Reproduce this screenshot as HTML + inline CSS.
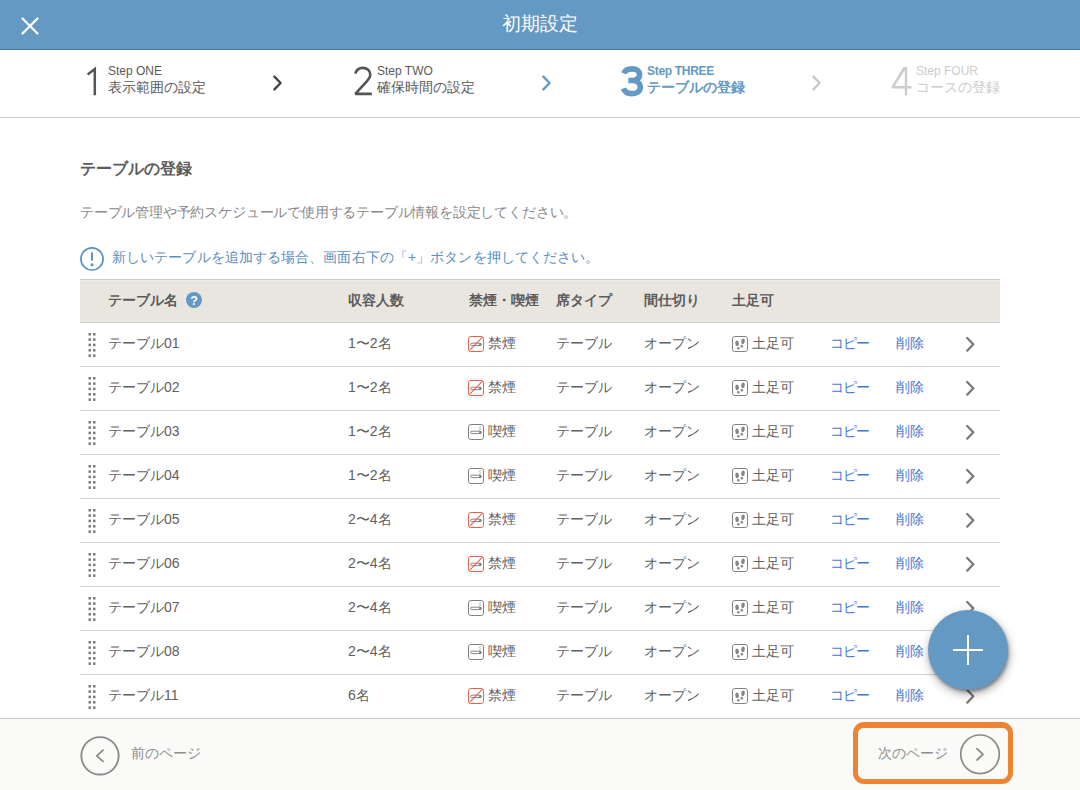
<!DOCTYPE html>
<html><head><meta charset="utf-8">
<style>
*{box-sizing:border-box;margin:0;padding:0}
html,body{width:1080px;height:790px;overflow:hidden;background:#fff;font-family:"Liberation Sans",sans-serif;color:#555}
.abs{position:absolute}
#hdr{position:absolute;left:0;top:0;width:1080px;height:50px;background:#6399c3;border-bottom:1px solid #4b7499}
#hdr .t{position:absolute;left:0;width:1080px;top:13px;text-align:center;color:#fff;font-size:19px;line-height:22px}
#steps{position:absolute;left:0;top:50px;width:1080px;height:68px;border-bottom:1px solid #cfcfcf;background:#fff}
.step{position:absolute;top:0;height:68px}
.step .n{position:absolute;top:6px;left:0;font-size:39px;line-height:46px;font-weight:normal}
.step .s{position:absolute;top:14px;font-size:12px;line-height:14px;white-space:nowrap}
.step .j{position:absolute;top:29px;font-size:14px;line-height:17px;white-space:nowrap}
.chev{position:absolute}
.main{position:absolute;left:80px;top:118px;width:920px}
h1{position:absolute;left:80px;top:159px;font-size:16px;line-height:20px;font-weight:bold;color:#5c5c5c;white-space:nowrap}
.desc{position:absolute;left:80px;top:203px;letter-spacing:-0.19px;font-size:14px;line-height:18px;color:#888;white-space:nowrap}
.info{position:absolute;left:112px;top:248px;letter-spacing:0.09px;font-size:14px;line-height:18px;color:#5a8fc0;white-space:nowrap}
#tbl{position:absolute;left:80px;top:279px;width:920px}
.th{position:absolute;left:0;top:0;width:920px;height:44px;background:#e9e6df;border-top:1px solid #cccccc;border-bottom:1px solid #cccccc;box-shadow:inset 0 1px #eeece4,inset 0 -1px #eeece4}
.th span{position:absolute;top:11px;font-size:14px;line-height:18px;font-weight:bold;color:#5c5c5c;white-space:nowrap}
.row{position:absolute;left:0;width:920px;height:44px;border-bottom:1px solid #d2d2d2}
.row span{position:absolute;top:11px;font-size:14px;line-height:18px;color:#606060;white-space:nowrap}
.row .lk{color:#4279cf}
#foot{position:absolute;left:0;top:718px;width:1080px;height:72px;background:#fafaf8;border-top:1px solid #cccccc}
.fab{position:absolute;left:928px;top:610px;width:80px;height:80px;border-radius:50%;background:#6399c3;box-shadow:1px 2px 3px rgba(0,0,0,.3),1px 4px 10px rgba(0,0,0,.35)}
</style></head><body>
<div id="hdr">
  <svg class="abs" style="left:0;top:0" width="60" height="50"><path d="M22.5 18.5L37.5 33.5M37.5 18.5L22.5 33.5" stroke="#fff" stroke-width="2.3" stroke-linecap="round"/></svg>
  <div class="t">初期設定</div>
</div>
<div id="steps">
  <svg class="abs" style="left:0;top:-50px" width="1080" height="118">
    <path d="M87.6 74.4L94.8 69V95.2" fill="none" stroke="#555" stroke-width="2.5" stroke-linejoin="miter"/>
    <path d="M355.2 73.6C356.2 70.3 359 67.9 362.8 67.9C367 67.9 370.3 70.8 370.3 74.7C370.3 77.2 369.2 79 367 81.2L355.3 93.9H371.8" fill="none" stroke="#555" stroke-width="2.6" stroke-linejoin="bevel"/>
    <path d="M623.8 73.4C625.1 70.4 628.2 68.9 632 68.9C636.6 68.9 639.6 71.3 639.6 74.6C639.6 78.2 636.6 80.5 632.3 80.5H628.3M632.3 80.5C637 80.5 640.3 83.3 640.3 87.4C640.3 91.3 636.8 93.6 631.9 93.6C627.9 93.6 624.6 91.9 623.5 88.4" fill="none" stroke="#6399c3" stroke-width="5.6"/>
    <path d="M903.3 67H907.2V86H911.5V88.4H907.2V95.2H904.8V88.4H891.8V86.2ZM904.8 70.2V86H894.6Z" fill="#cccccc" fill-rule="evenodd"/>
  </svg>
  <div class="step" style="left:85px;color:#5a5a5a"><div class="s" style="left:23px">Step ONE</div><div class="j" style="left:23px">表示範囲の設定</div></div>
  <div class="step" style="left:351px;color:#5a5a5a"><div class="s" style="left:26px">Step TWO</div><div class="j" style="left:26px">確保時間の設定</div></div>
  <div class="step" style="left:619px;color:#6399c3"><div class="s" style="left:28px;font-weight:bold;letter-spacing:-0.3px">Step THREE</div><div class="j" style="left:28px;font-weight:bold">テーブルの登録</div></div>
  <div class="step" style="left:889px;color:#cccccc"><div class="s" style="left:27px">Step FOUR</div><div class="j" style="left:27px">コースの登録</div></div>
  <svg class="abs" style="left:270px;top:22px" width="16" height="22"><path d="M4.4 4.6L10.6 11L4.4 17.4" fill="none" stroke="#444" stroke-width="2.4" stroke-linecap="round" stroke-linejoin="round"/></svg>
  <svg class="abs" style="left:539px;top:22px" width="16" height="22"><path d="M4.4 4.6L10.6 11L4.4 17.4" fill="none" stroke="#6399c3" stroke-width="2.4" stroke-linecap="round" stroke-linejoin="round"/></svg>
  <svg class="abs" style="left:809px;top:22px" width="16" height="22"><path d="M4.4 4.6L10.6 11L4.4 17.4" fill="none" stroke="#c8c8c8" stroke-width="2.4" stroke-linecap="round" stroke-linejoin="round"/></svg>
</div>
<h1>テーブルの登録</h1>
<div class="desc">テーブル管理や予約スケジュールで使用するテーブル情報を設定してください。</div>
<svg class="abs" style="left:79px;top:246px" width="26" height="26"><circle cx="13" cy="12.9" r="11.1" fill="none" stroke="#5592c6" stroke-width="1.7"/><path d="M13 7V13.9" stroke="#5592c6" stroke-width="1.9" stroke-linecap="round"/><circle cx="13" cy="18.8" r="1.55" fill="#5592c6"/></svg>
<div class="info">新しいテーブルを追加する場合、画面右下の「+」ボタンを押してください。</div>
<div id="tbl">
  <div class="th">
    <span style="left:28px">テーブル名</span>
    <svg class="abs" style="left:105px;top:11px" width="18" height="18"><circle cx="9" cy="9" r="8" fill="#6399c3"/><text x="9" y="13.6" text-anchor="middle" font-size="12.5" font-weight="bold" fill="#fff" font-family="Liberation Sans">?</text></svg>
    <span style="left:268px">収容人数</span>
    <span style="left:389px">禁煙・喫煙</span>
    <span style="left:476px">席タイプ</span>
    <span style="left:564px">間仕切り</span>
    <span style="left:652px">土足可</span>
  </div>
<div class="row" style="top:44px"><svg class="abs" style="left:7px;top:9px" width="12" height="28"><rect x="1.50" y="1.00" width="2.5" height="2.5" fill="#7a7a7a"/><rect x="6.00" y="1.00" width="2.5" height="2.5" fill="#7a7a7a"/><rect x="1.50" y="6.35" width="2.5" height="2.5" fill="#7a7a7a"/><rect x="6.00" y="6.35" width="2.5" height="2.5" fill="#7a7a7a"/><rect x="1.50" y="11.70" width="2.5" height="2.5" fill="#7a7a7a"/><rect x="6.00" y="11.70" width="2.5" height="2.5" fill="#7a7a7a"/><rect x="1.50" y="17.05" width="2.5" height="2.5" fill="#7a7a7a"/><rect x="6.00" y="17.05" width="2.5" height="2.5" fill="#7a7a7a"/><rect x="1.50" y="22.40" width="2.5" height="2.5" fill="#7a7a7a"/><rect x="6.00" y="22.40" width="2.5" height="2.5" fill="#7a7a7a"/></svg><span style="left:28px">テーブル01</span><span style="left:268px">1〜2名</span><svg class="abs" style="left:388px;top:13px" width="16" height="16"><rect x="0.5" y="0.5" width="15" height="15" rx="2.2" fill="#fff" stroke="#e8614a" stroke-width="1"/><rect x="2.6" y="7.2" width="10.6" height="2.4" rx="1.2" fill="none" stroke="#777" stroke-width=".9"/><rect x="11.2" y="7.2" width="2" height="2.4" fill="#777"/><path d="M1.5 14.3L14.5 1.2" stroke="#e8614a" stroke-width="1.1"/></svg><span style="left:408px">禁煙</span><span style="left:476px">テーブル</span><span style="left:564px">オープン</span><svg class="abs" style="left:652px;top:13px" width="16" height="16"><rect x="0.5" y="0.5" width="15" height="15" rx="2.2" fill="#fff" stroke="#808080" stroke-width="1"/><ellipse cx="5.1" cy="7.4" rx="1.8" ry="2.9" fill="#858585" transform="rotate(-8 5.1 7.4)"/><ellipse cx="6.3" cy="12.3" rx="1.3" ry="1.2" fill="#858585"/><ellipse cx="11" cy="5.3" rx="1.8" ry="2.9" fill="#858585" transform="rotate(10 11 5.3)"/><ellipse cx="9.8" cy="10.3" rx="1.3" ry="1.2" fill="#858585"/></svg><span style="left:672px">土足可</span><span class="lk" style="left:750px;letter-spacing:-1px">コピー</span><span class="lk" style="left:816px">削除</span><svg class="abs" style="left:882px;top:13px" width="16" height="18"><path d="M5.2 1.9L11.3 8.3L5.2 14.7" fill="none" stroke="#777" stroke-width="2.2" stroke-linecap="round" stroke-linejoin="round"/></svg></div>
<div class="row" style="top:88px"><svg class="abs" style="left:7px;top:9px" width="12" height="28"><rect x="1.50" y="1.00" width="2.5" height="2.5" fill="#7a7a7a"/><rect x="6.00" y="1.00" width="2.5" height="2.5" fill="#7a7a7a"/><rect x="1.50" y="6.35" width="2.5" height="2.5" fill="#7a7a7a"/><rect x="6.00" y="6.35" width="2.5" height="2.5" fill="#7a7a7a"/><rect x="1.50" y="11.70" width="2.5" height="2.5" fill="#7a7a7a"/><rect x="6.00" y="11.70" width="2.5" height="2.5" fill="#7a7a7a"/><rect x="1.50" y="17.05" width="2.5" height="2.5" fill="#7a7a7a"/><rect x="6.00" y="17.05" width="2.5" height="2.5" fill="#7a7a7a"/><rect x="1.50" y="22.40" width="2.5" height="2.5" fill="#7a7a7a"/><rect x="6.00" y="22.40" width="2.5" height="2.5" fill="#7a7a7a"/></svg><span style="left:28px">テーブル02</span><span style="left:268px">1〜2名</span><svg class="abs" style="left:388px;top:13px" width="16" height="16"><rect x="0.5" y="0.5" width="15" height="15" rx="2.2" fill="#fff" stroke="#e8614a" stroke-width="1"/><rect x="2.6" y="7.2" width="10.6" height="2.4" rx="1.2" fill="none" stroke="#777" stroke-width=".9"/><rect x="11.2" y="7.2" width="2" height="2.4" fill="#777"/><path d="M1.5 14.3L14.5 1.2" stroke="#e8614a" stroke-width="1.1"/></svg><span style="left:408px">禁煙</span><span style="left:476px">テーブル</span><span style="left:564px">オープン</span><svg class="abs" style="left:652px;top:13px" width="16" height="16"><rect x="0.5" y="0.5" width="15" height="15" rx="2.2" fill="#fff" stroke="#808080" stroke-width="1"/><ellipse cx="5.1" cy="7.4" rx="1.8" ry="2.9" fill="#858585" transform="rotate(-8 5.1 7.4)"/><ellipse cx="6.3" cy="12.3" rx="1.3" ry="1.2" fill="#858585"/><ellipse cx="11" cy="5.3" rx="1.8" ry="2.9" fill="#858585" transform="rotate(10 11 5.3)"/><ellipse cx="9.8" cy="10.3" rx="1.3" ry="1.2" fill="#858585"/></svg><span style="left:672px">土足可</span><span class="lk" style="left:750px;letter-spacing:-1px">コピー</span><span class="lk" style="left:816px">削除</span><svg class="abs" style="left:882px;top:13px" width="16" height="18"><path d="M5.2 1.9L11.3 8.3L5.2 14.7" fill="none" stroke="#777" stroke-width="2.2" stroke-linecap="round" stroke-linejoin="round"/></svg></div>
<div class="row" style="top:132px"><svg class="abs" style="left:7px;top:9px" width="12" height="28"><rect x="1.50" y="1.00" width="2.5" height="2.5" fill="#7a7a7a"/><rect x="6.00" y="1.00" width="2.5" height="2.5" fill="#7a7a7a"/><rect x="1.50" y="6.35" width="2.5" height="2.5" fill="#7a7a7a"/><rect x="6.00" y="6.35" width="2.5" height="2.5" fill="#7a7a7a"/><rect x="1.50" y="11.70" width="2.5" height="2.5" fill="#7a7a7a"/><rect x="6.00" y="11.70" width="2.5" height="2.5" fill="#7a7a7a"/><rect x="1.50" y="17.05" width="2.5" height="2.5" fill="#7a7a7a"/><rect x="6.00" y="17.05" width="2.5" height="2.5" fill="#7a7a7a"/><rect x="1.50" y="22.40" width="2.5" height="2.5" fill="#7a7a7a"/><rect x="6.00" y="22.40" width="2.5" height="2.5" fill="#7a7a7a"/></svg><span style="left:28px">テーブル03</span><span style="left:268px">1〜2名</span><svg class="abs" style="left:388px;top:13px" width="16" height="16"><rect x="0.5" y="0.5" width="15" height="15" rx="2.2" fill="#fff" stroke="#808080" stroke-width="1"/><rect x="2.6" y="7.2" width="10.6" height="2.4" rx="1.2" fill="none" stroke="#777" stroke-width=".9"/><rect x="11.2" y="7.2" width="2" height="2.4" fill="#777"/><path d="M12.6 2.6C11.4 2.6 11.2 3.7 12 4.2C12.8 4.7 12.6 5.8 11.4 5.8" fill="none" stroke="#888" stroke-width=".7"/></svg><span style="left:408px">喫煙</span><span style="left:476px">テーブル</span><span style="left:564px">オープン</span><svg class="abs" style="left:652px;top:13px" width="16" height="16"><rect x="0.5" y="0.5" width="15" height="15" rx="2.2" fill="#fff" stroke="#808080" stroke-width="1"/><ellipse cx="5.1" cy="7.4" rx="1.8" ry="2.9" fill="#858585" transform="rotate(-8 5.1 7.4)"/><ellipse cx="6.3" cy="12.3" rx="1.3" ry="1.2" fill="#858585"/><ellipse cx="11" cy="5.3" rx="1.8" ry="2.9" fill="#858585" transform="rotate(10 11 5.3)"/><ellipse cx="9.8" cy="10.3" rx="1.3" ry="1.2" fill="#858585"/></svg><span style="left:672px">土足可</span><span class="lk" style="left:750px;letter-spacing:-1px">コピー</span><span class="lk" style="left:816px">削除</span><svg class="abs" style="left:882px;top:13px" width="16" height="18"><path d="M5.2 1.9L11.3 8.3L5.2 14.7" fill="none" stroke="#777" stroke-width="2.2" stroke-linecap="round" stroke-linejoin="round"/></svg></div>
<div class="row" style="top:176px"><svg class="abs" style="left:7px;top:9px" width="12" height="28"><rect x="1.50" y="1.00" width="2.5" height="2.5" fill="#7a7a7a"/><rect x="6.00" y="1.00" width="2.5" height="2.5" fill="#7a7a7a"/><rect x="1.50" y="6.35" width="2.5" height="2.5" fill="#7a7a7a"/><rect x="6.00" y="6.35" width="2.5" height="2.5" fill="#7a7a7a"/><rect x="1.50" y="11.70" width="2.5" height="2.5" fill="#7a7a7a"/><rect x="6.00" y="11.70" width="2.5" height="2.5" fill="#7a7a7a"/><rect x="1.50" y="17.05" width="2.5" height="2.5" fill="#7a7a7a"/><rect x="6.00" y="17.05" width="2.5" height="2.5" fill="#7a7a7a"/><rect x="1.50" y="22.40" width="2.5" height="2.5" fill="#7a7a7a"/><rect x="6.00" y="22.40" width="2.5" height="2.5" fill="#7a7a7a"/></svg><span style="left:28px">テーブル04</span><span style="left:268px">1〜2名</span><svg class="abs" style="left:388px;top:13px" width="16" height="16"><rect x="0.5" y="0.5" width="15" height="15" rx="2.2" fill="#fff" stroke="#808080" stroke-width="1"/><rect x="2.6" y="7.2" width="10.6" height="2.4" rx="1.2" fill="none" stroke="#777" stroke-width=".9"/><rect x="11.2" y="7.2" width="2" height="2.4" fill="#777"/><path d="M12.6 2.6C11.4 2.6 11.2 3.7 12 4.2C12.8 4.7 12.6 5.8 11.4 5.8" fill="none" stroke="#888" stroke-width=".7"/></svg><span style="left:408px">喫煙</span><span style="left:476px">テーブル</span><span style="left:564px">オープン</span><svg class="abs" style="left:652px;top:13px" width="16" height="16"><rect x="0.5" y="0.5" width="15" height="15" rx="2.2" fill="#fff" stroke="#808080" stroke-width="1"/><ellipse cx="5.1" cy="7.4" rx="1.8" ry="2.9" fill="#858585" transform="rotate(-8 5.1 7.4)"/><ellipse cx="6.3" cy="12.3" rx="1.3" ry="1.2" fill="#858585"/><ellipse cx="11" cy="5.3" rx="1.8" ry="2.9" fill="#858585" transform="rotate(10 11 5.3)"/><ellipse cx="9.8" cy="10.3" rx="1.3" ry="1.2" fill="#858585"/></svg><span style="left:672px">土足可</span><span class="lk" style="left:750px;letter-spacing:-1px">コピー</span><span class="lk" style="left:816px">削除</span><svg class="abs" style="left:882px;top:13px" width="16" height="18"><path d="M5.2 1.9L11.3 8.3L5.2 14.7" fill="none" stroke="#777" stroke-width="2.2" stroke-linecap="round" stroke-linejoin="round"/></svg></div>
<div class="row" style="top:220px"><svg class="abs" style="left:7px;top:9px" width="12" height="28"><rect x="1.50" y="1.00" width="2.5" height="2.5" fill="#7a7a7a"/><rect x="6.00" y="1.00" width="2.5" height="2.5" fill="#7a7a7a"/><rect x="1.50" y="6.35" width="2.5" height="2.5" fill="#7a7a7a"/><rect x="6.00" y="6.35" width="2.5" height="2.5" fill="#7a7a7a"/><rect x="1.50" y="11.70" width="2.5" height="2.5" fill="#7a7a7a"/><rect x="6.00" y="11.70" width="2.5" height="2.5" fill="#7a7a7a"/><rect x="1.50" y="17.05" width="2.5" height="2.5" fill="#7a7a7a"/><rect x="6.00" y="17.05" width="2.5" height="2.5" fill="#7a7a7a"/><rect x="1.50" y="22.40" width="2.5" height="2.5" fill="#7a7a7a"/><rect x="6.00" y="22.40" width="2.5" height="2.5" fill="#7a7a7a"/></svg><span style="left:28px">テーブル05</span><span style="left:268px">2〜4名</span><svg class="abs" style="left:388px;top:13px" width="16" height="16"><rect x="0.5" y="0.5" width="15" height="15" rx="2.2" fill="#fff" stroke="#e8614a" stroke-width="1"/><rect x="2.6" y="7.2" width="10.6" height="2.4" rx="1.2" fill="none" stroke="#777" stroke-width=".9"/><rect x="11.2" y="7.2" width="2" height="2.4" fill="#777"/><path d="M1.5 14.3L14.5 1.2" stroke="#e8614a" stroke-width="1.1"/></svg><span style="left:408px">禁煙</span><span style="left:476px">テーブル</span><span style="left:564px">オープン</span><svg class="abs" style="left:652px;top:13px" width="16" height="16"><rect x="0.5" y="0.5" width="15" height="15" rx="2.2" fill="#fff" stroke="#808080" stroke-width="1"/><ellipse cx="5.1" cy="7.4" rx="1.8" ry="2.9" fill="#858585" transform="rotate(-8 5.1 7.4)"/><ellipse cx="6.3" cy="12.3" rx="1.3" ry="1.2" fill="#858585"/><ellipse cx="11" cy="5.3" rx="1.8" ry="2.9" fill="#858585" transform="rotate(10 11 5.3)"/><ellipse cx="9.8" cy="10.3" rx="1.3" ry="1.2" fill="#858585"/></svg><span style="left:672px">土足可</span><span class="lk" style="left:750px;letter-spacing:-1px">コピー</span><span class="lk" style="left:816px">削除</span><svg class="abs" style="left:882px;top:13px" width="16" height="18"><path d="M5.2 1.9L11.3 8.3L5.2 14.7" fill="none" stroke="#777" stroke-width="2.2" stroke-linecap="round" stroke-linejoin="round"/></svg></div>
<div class="row" style="top:264px"><svg class="abs" style="left:7px;top:9px" width="12" height="28"><rect x="1.50" y="1.00" width="2.5" height="2.5" fill="#7a7a7a"/><rect x="6.00" y="1.00" width="2.5" height="2.5" fill="#7a7a7a"/><rect x="1.50" y="6.35" width="2.5" height="2.5" fill="#7a7a7a"/><rect x="6.00" y="6.35" width="2.5" height="2.5" fill="#7a7a7a"/><rect x="1.50" y="11.70" width="2.5" height="2.5" fill="#7a7a7a"/><rect x="6.00" y="11.70" width="2.5" height="2.5" fill="#7a7a7a"/><rect x="1.50" y="17.05" width="2.5" height="2.5" fill="#7a7a7a"/><rect x="6.00" y="17.05" width="2.5" height="2.5" fill="#7a7a7a"/><rect x="1.50" y="22.40" width="2.5" height="2.5" fill="#7a7a7a"/><rect x="6.00" y="22.40" width="2.5" height="2.5" fill="#7a7a7a"/></svg><span style="left:28px">テーブル06</span><span style="left:268px">2〜4名</span><svg class="abs" style="left:388px;top:13px" width="16" height="16"><rect x="0.5" y="0.5" width="15" height="15" rx="2.2" fill="#fff" stroke="#e8614a" stroke-width="1"/><rect x="2.6" y="7.2" width="10.6" height="2.4" rx="1.2" fill="none" stroke="#777" stroke-width=".9"/><rect x="11.2" y="7.2" width="2" height="2.4" fill="#777"/><path d="M1.5 14.3L14.5 1.2" stroke="#e8614a" stroke-width="1.1"/></svg><span style="left:408px">禁煙</span><span style="left:476px">テーブル</span><span style="left:564px">オープン</span><svg class="abs" style="left:652px;top:13px" width="16" height="16"><rect x="0.5" y="0.5" width="15" height="15" rx="2.2" fill="#fff" stroke="#808080" stroke-width="1"/><ellipse cx="5.1" cy="7.4" rx="1.8" ry="2.9" fill="#858585" transform="rotate(-8 5.1 7.4)"/><ellipse cx="6.3" cy="12.3" rx="1.3" ry="1.2" fill="#858585"/><ellipse cx="11" cy="5.3" rx="1.8" ry="2.9" fill="#858585" transform="rotate(10 11 5.3)"/><ellipse cx="9.8" cy="10.3" rx="1.3" ry="1.2" fill="#858585"/></svg><span style="left:672px">土足可</span><span class="lk" style="left:750px;letter-spacing:-1px">コピー</span><span class="lk" style="left:816px">削除</span><svg class="abs" style="left:882px;top:13px" width="16" height="18"><path d="M5.2 1.9L11.3 8.3L5.2 14.7" fill="none" stroke="#777" stroke-width="2.2" stroke-linecap="round" stroke-linejoin="round"/></svg></div>
<div class="row" style="top:308px"><svg class="abs" style="left:7px;top:9px" width="12" height="28"><rect x="1.50" y="1.00" width="2.5" height="2.5" fill="#7a7a7a"/><rect x="6.00" y="1.00" width="2.5" height="2.5" fill="#7a7a7a"/><rect x="1.50" y="6.35" width="2.5" height="2.5" fill="#7a7a7a"/><rect x="6.00" y="6.35" width="2.5" height="2.5" fill="#7a7a7a"/><rect x="1.50" y="11.70" width="2.5" height="2.5" fill="#7a7a7a"/><rect x="6.00" y="11.70" width="2.5" height="2.5" fill="#7a7a7a"/><rect x="1.50" y="17.05" width="2.5" height="2.5" fill="#7a7a7a"/><rect x="6.00" y="17.05" width="2.5" height="2.5" fill="#7a7a7a"/><rect x="1.50" y="22.40" width="2.5" height="2.5" fill="#7a7a7a"/><rect x="6.00" y="22.40" width="2.5" height="2.5" fill="#7a7a7a"/></svg><span style="left:28px">テーブル07</span><span style="left:268px">2〜4名</span><svg class="abs" style="left:388px;top:13px" width="16" height="16"><rect x="0.5" y="0.5" width="15" height="15" rx="2.2" fill="#fff" stroke="#808080" stroke-width="1"/><rect x="2.6" y="7.2" width="10.6" height="2.4" rx="1.2" fill="none" stroke="#777" stroke-width=".9"/><rect x="11.2" y="7.2" width="2" height="2.4" fill="#777"/><path d="M12.6 2.6C11.4 2.6 11.2 3.7 12 4.2C12.8 4.7 12.6 5.8 11.4 5.8" fill="none" stroke="#888" stroke-width=".7"/></svg><span style="left:408px">喫煙</span><span style="left:476px">テーブル</span><span style="left:564px">オープン</span><svg class="abs" style="left:652px;top:13px" width="16" height="16"><rect x="0.5" y="0.5" width="15" height="15" rx="2.2" fill="#fff" stroke="#808080" stroke-width="1"/><ellipse cx="5.1" cy="7.4" rx="1.8" ry="2.9" fill="#858585" transform="rotate(-8 5.1 7.4)"/><ellipse cx="6.3" cy="12.3" rx="1.3" ry="1.2" fill="#858585"/><ellipse cx="11" cy="5.3" rx="1.8" ry="2.9" fill="#858585" transform="rotate(10 11 5.3)"/><ellipse cx="9.8" cy="10.3" rx="1.3" ry="1.2" fill="#858585"/></svg><span style="left:672px">土足可</span><span class="lk" style="left:750px;letter-spacing:-1px">コピー</span><span class="lk" style="left:816px">削除</span><svg class="abs" style="left:882px;top:13px" width="16" height="18"><path d="M5.2 1.9L11.3 8.3L5.2 14.7" fill="none" stroke="#777" stroke-width="2.2" stroke-linecap="round" stroke-linejoin="round"/></svg></div>
<div class="row" style="top:352px"><svg class="abs" style="left:7px;top:9px" width="12" height="28"><rect x="1.50" y="1.00" width="2.5" height="2.5" fill="#7a7a7a"/><rect x="6.00" y="1.00" width="2.5" height="2.5" fill="#7a7a7a"/><rect x="1.50" y="6.35" width="2.5" height="2.5" fill="#7a7a7a"/><rect x="6.00" y="6.35" width="2.5" height="2.5" fill="#7a7a7a"/><rect x="1.50" y="11.70" width="2.5" height="2.5" fill="#7a7a7a"/><rect x="6.00" y="11.70" width="2.5" height="2.5" fill="#7a7a7a"/><rect x="1.50" y="17.05" width="2.5" height="2.5" fill="#7a7a7a"/><rect x="6.00" y="17.05" width="2.5" height="2.5" fill="#7a7a7a"/><rect x="1.50" y="22.40" width="2.5" height="2.5" fill="#7a7a7a"/><rect x="6.00" y="22.40" width="2.5" height="2.5" fill="#7a7a7a"/></svg><span style="left:28px">テーブル08</span><span style="left:268px">2〜4名</span><svg class="abs" style="left:388px;top:13px" width="16" height="16"><rect x="0.5" y="0.5" width="15" height="15" rx="2.2" fill="#fff" stroke="#808080" stroke-width="1"/><rect x="2.6" y="7.2" width="10.6" height="2.4" rx="1.2" fill="none" stroke="#777" stroke-width=".9"/><rect x="11.2" y="7.2" width="2" height="2.4" fill="#777"/><path d="M12.6 2.6C11.4 2.6 11.2 3.7 12 4.2C12.8 4.7 12.6 5.8 11.4 5.8" fill="none" stroke="#888" stroke-width=".7"/></svg><span style="left:408px">喫煙</span><span style="left:476px">テーブル</span><span style="left:564px">オープン</span><svg class="abs" style="left:652px;top:13px" width="16" height="16"><rect x="0.5" y="0.5" width="15" height="15" rx="2.2" fill="#fff" stroke="#808080" stroke-width="1"/><ellipse cx="5.1" cy="7.4" rx="1.8" ry="2.9" fill="#858585" transform="rotate(-8 5.1 7.4)"/><ellipse cx="6.3" cy="12.3" rx="1.3" ry="1.2" fill="#858585"/><ellipse cx="11" cy="5.3" rx="1.8" ry="2.9" fill="#858585" transform="rotate(10 11 5.3)"/><ellipse cx="9.8" cy="10.3" rx="1.3" ry="1.2" fill="#858585"/></svg><span style="left:672px">土足可</span><span class="lk" style="left:750px;letter-spacing:-1px">コピー</span><span class="lk" style="left:816px">削除</span><svg class="abs" style="left:882px;top:13px" width="16" height="18"><path d="M5.2 1.9L11.3 8.3L5.2 14.7" fill="none" stroke="#777" stroke-width="2.2" stroke-linecap="round" stroke-linejoin="round"/></svg></div>
<div class="row" style="top:396px"><svg class="abs" style="left:7px;top:9px" width="12" height="28"><rect x="1.50" y="1.00" width="2.5" height="2.5" fill="#7a7a7a"/><rect x="6.00" y="1.00" width="2.5" height="2.5" fill="#7a7a7a"/><rect x="1.50" y="6.35" width="2.5" height="2.5" fill="#7a7a7a"/><rect x="6.00" y="6.35" width="2.5" height="2.5" fill="#7a7a7a"/><rect x="1.50" y="11.70" width="2.5" height="2.5" fill="#7a7a7a"/><rect x="6.00" y="11.70" width="2.5" height="2.5" fill="#7a7a7a"/><rect x="1.50" y="17.05" width="2.5" height="2.5" fill="#7a7a7a"/><rect x="6.00" y="17.05" width="2.5" height="2.5" fill="#7a7a7a"/><rect x="1.50" y="22.40" width="2.5" height="2.5" fill="#7a7a7a"/><rect x="6.00" y="22.40" width="2.5" height="2.5" fill="#7a7a7a"/></svg><span style="left:28px">テーブル11</span><span style="left:268px">6名</span><svg class="abs" style="left:388px;top:13px" width="16" height="16"><rect x="0.5" y="0.5" width="15" height="15" rx="2.2" fill="#fff" stroke="#e8614a" stroke-width="1"/><rect x="2.6" y="7.2" width="10.6" height="2.4" rx="1.2" fill="none" stroke="#777" stroke-width=".9"/><rect x="11.2" y="7.2" width="2" height="2.4" fill="#777"/><path d="M1.5 14.3L14.5 1.2" stroke="#e8614a" stroke-width="1.1"/></svg><span style="left:408px">禁煙</span><span style="left:476px">テーブル</span><span style="left:564px">オープン</span><svg class="abs" style="left:652px;top:13px" width="16" height="16"><rect x="0.5" y="0.5" width="15" height="15" rx="2.2" fill="#fff" stroke="#808080" stroke-width="1"/><ellipse cx="5.1" cy="7.4" rx="1.8" ry="2.9" fill="#858585" transform="rotate(-8 5.1 7.4)"/><ellipse cx="6.3" cy="12.3" rx="1.3" ry="1.2" fill="#858585"/><ellipse cx="11" cy="5.3" rx="1.8" ry="2.9" fill="#858585" transform="rotate(10 11 5.3)"/><ellipse cx="9.8" cy="10.3" rx="1.3" ry="1.2" fill="#858585"/></svg><span style="left:672px">土足可</span><span class="lk" style="left:750px;letter-spacing:-1px">コピー</span><span class="lk" style="left:816px">削除</span><svg class="abs" style="left:882px;top:13px" width="16" height="18"><path d="M5.2 1.9L11.3 8.3L5.2 14.7" fill="none" stroke="#777" stroke-width="2.2" stroke-linecap="round" stroke-linejoin="round"/></svg></div>
</div>
<div id="foot">
  <svg class="abs" style="left:79px;top:16px" width="42" height="42"><circle cx="21" cy="20.8" r="18.7" fill="none" stroke="#8a8a8a" stroke-width="1.8"/><path d="M24 15.2L17.8 20.8L24 26.4" fill="none" stroke="#8a8a8a" stroke-width="1.8" stroke-linecap="round" stroke-linejoin="round"/></svg>
  <div class="abs" style="left:131px;top:25px;font-size:14px;line-height:18px;color:#8e8e8e">前のページ</div>
  <div class="abs" style="left:878px;top:25px;font-size:14px;line-height:18px;color:#8e8e8e">次のページ</div>
  <svg class="abs" style="left:959px;top:14px" width="42" height="42"><circle cx="21" cy="21.3" r="19.3" fill="none" stroke="#8a8a8a" stroke-width="1.7"/><path d="M18 15.6L24 21.3L18 27" fill="none" stroke="#8a8a8a" stroke-width="1.8" stroke-linecap="round" stroke-linejoin="round"/></svg>
  <div class="abs" style="left:853px;top:3px;width:160px;height:62px;border:5.7px solid #ec8434;border-top-width:6.5px;border-radius:11px"></div>
</div>
<div class="fab"><svg class="abs" style="left:0;top:0" width="80" height="80"><path d="M25 40H55M40 25V55" stroke="#fff" stroke-width="2"/></svg></div>
</body></html>
